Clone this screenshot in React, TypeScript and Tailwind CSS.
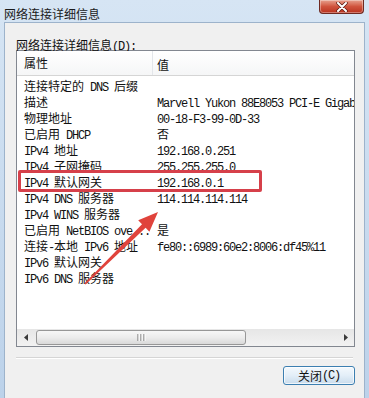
import React from "react"

// splits a label into latin / cjk runs so latin gets the narrow 6px mono advance
function Mixed({ text }: { text: string }) {
  const parts = text.match(/[\x00-\x7f]+|[^\x00-\x7f]+/g) ?? []
  return (
    <>
      {parts.map((p, i) =>
        /^[\x00-\x7f]/.test(p) ? (
          <span key={i} className="font-['Liberation_Mono',monospace] text-[12px] leading-[14px] tracking-[-1.2px] whitespace-pre">
            {p}
          </span>
        ) : (
          <span key={i} className="font-['Noto_Sans_CJK_SC',sans-serif] text-[12px] leading-[14px]">
            {p}
          </span>
        )
      )}
    </>
  )
}

const rows: [string, string][] = [
  ["连接特定的 DNS 后缀", ""],
  ["描述", "Marvell Yukon 88E8053 PCI-E Gigab"],
  ["物理地址", "00-18-F3-99-0D-33"],
  ["已启用 DHCP", "否"],
  ["IPv4 地址", "192.168.0.251"],
  ["IPv4 子网掩码", "255.255.255.0"],
  ["IPv4 默认网关", "192.168.0.1"],
  ["IPv4 DNS 服务器", "114.114.114.114"],
  ["IPv4 WINS 服务器", ""],
  ["已启用 NetBIOS ove...", "是"],
  ["连接-本地 IPv6 地址", "fe80::6989:60e2:8006:df45%11"],
  ["IPv6 默认网关", ""],
  ["IPv6 DNS 服务器", ""],
]

export default function App() {
  return (
    <div className="relative w-[369px] h-[398px] overflow-hidden bg-gradient-to-b from-[#d6e5f4] to-[#bcd2ea] text-[#111] font-['Noto_Sans_CJK_SC',sans-serif]">
      {/* Title bar */}
      <div className="h-[22px] flex items-start">
        <div className="pl-[4px] pt-[5px] leading-[14px] text-[#1b1b1b]">
          <Mixed text="网络连接详细信息" />
        </div>
        <div className="ml-auto mr-[5px] w-[45px] h-[14px] rounded-b-[4px] border border-t-0 border-[#6e2a22] bg-gradient-to-b from-[#e6a08e] via-[#d0533d] to-[#b8321f] flex items-center justify-center shadow-[inset_0_0_0_1px_rgba(255,255,255,0.35)]">
          <svg width="12" height="10" viewBox="0 0 12 10">
            <path d="M2 1 L10 9 M10 1 L2 9" stroke="#5a1a12" strokeWidth="3.4" strokeLinecap="round" />
            <path d="M2 1 L10 9 M10 1 L2 9" stroke="#ffffff" strokeWidth="2" strokeLinecap="round" />
          </svg>
        </div>
      </div>

      {/* Client area */}
      <div className="mx-[4px] h-[376px] border border-b-0 border-[#9db3cb] bg-[#f0f0f0] pl-[11px] pt-[13px]">
        <div className="h-[14px] leading-[14px] whitespace-nowrap">
          <Mixed text="网络连接详细信息(D):" />
        </div>

        {/* List view */}
        <div className="w-[339px] h-[297px] border border-[#828790] bg-white flex flex-col overflow-hidden">
          <div className="h-[25px] shrink-0 flex items-center border-b border-[#d5d5d5] bg-gradient-to-b from-white to-[#f5f6f7]">
            <div className="w-[135px] pl-[7px] self-stretch flex items-center">
              <Mixed text="属性" />
            </div>
            <div className="w-px self-stretch bg-[#e3e6ea]" />
            <div className="pl-[4px]">
              <Mixed text="值" />
            </div>
          </div>

          {rows.map(([k, v]) => (
            <div key={k} className="h-[16px] flex items-center shrink-0 whitespace-nowrap">
              <div className="w-[140px] shrink-0 pl-[7px]">
                <Mixed text={k} />
              </div>
              <div className="shrink-0">
                <Mixed text={v} />
              </div>
            </div>
          ))}

          <div className="flex-1" />

          {/* Horizontal scrollbar */}
          <div className="h-[17px] shrink-0 flex items-center bg-gradient-to-b from-[#e6e6e6] to-[#f2f2f2]">
            <div className="w-[17px] h-full flex items-center justify-center">
              <svg width="4" height="7" viewBox="0 0 4 7">
                <path d="M4 0 L0 3.5 L4 7 Z" fill="#3a3a3a" />
              </svg>
            </div>
            <div className="ml-[2px] w-[210px] h-[15px] rounded-[3px] border border-[#979797] bg-gradient-to-b from-[#f7f7f7] via-[#ececec] to-[#d9d9d9] flex items-center justify-center">
              <svg width="9" height="7" viewBox="0 0 9 7">
                <path d="M1 0 V7 M4 0 V7 M7 0 V7" stroke="#6b6b6b" strokeWidth="1" />
                <path d="M2 0 V7 M5 0 V7 M8 0 V7" stroke="#ffffff" strokeWidth="1" />
              </svg>
            </div>
            <div className="ml-auto w-[17px] h-full flex items-center justify-center">
              <svg width="4" height="7" viewBox="0 0 4 7">
                <path d="M0 0 L4 3.5 L0 7 Z" fill="#3a3a3a" />
              </svg>
            </div>
          </div>
        </div>

        {/* Etched separator */}
        <div className="mt-[10px] w-[337px] border-t border-b border-t-[#d5d5d5] border-b-white" />

        {/* Close button */}
        <div className="w-[339px] mt-[7px] flex justify-end">
          <div className="w-[72px] h-[19px] rounded-[3px] border border-[#3c7fb1] bg-gradient-to-b from-[#f4f9fd] via-[#e3eef8] to-[#c9dcec] shadow-[inset_0_0_0_1px_rgba(255,255,255,0.7)] flex items-center justify-center">
            <Mixed text="关闭(C)" />
          </div>
        </div>
      </div>

      {/* Annotation: highlight box */}
      <div className="absolute left-[18px] top-[170px] w-[244px] h-[22px] border-[3px] border-[#d6404a] rounded-[2px]" />

      {/* Annotation: arrow */}
      <svg className="absolute left-0 top-0" width="369" height="398" viewBox="0 0 369 398">
        <polygon
          points="158,212 149.4,231.7 145.6,227.8 85.6,284.6 84.4,283.4 142,224.2 138.2,220.3"
          fill="#e0433c"
        />
      </svg>
    </div>
  )
}
